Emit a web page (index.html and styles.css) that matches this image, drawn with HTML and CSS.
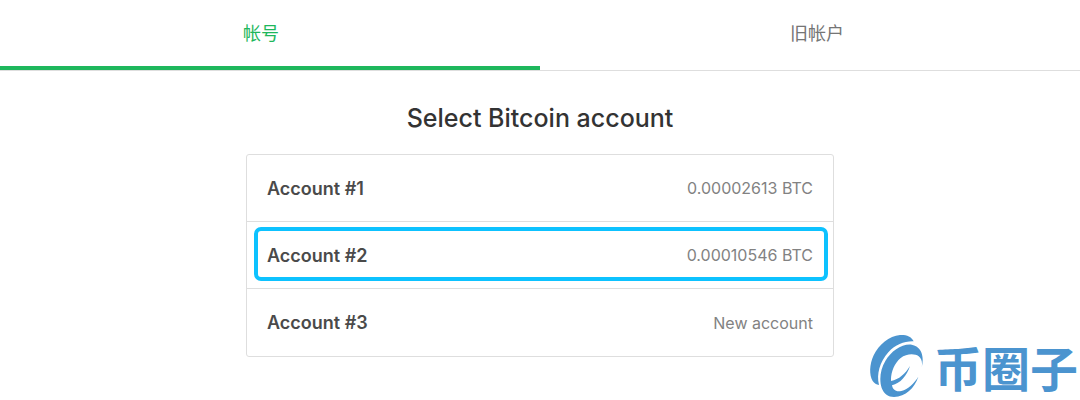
FILE: index.html
```
<!DOCTYPE html>
<html lang="zh-CN">
<head>
    <meta charset="UTF-8">
    <meta name="viewport" content="width=device-width, initial-scale=1.0">
    <title>Select Bitcoin account</title>
    <link rel="stylesheet" href="styles.css">
</head>
<body>
    <nav class="tabs">
        <a class="tab active" href="#accounts">帐号</a>
        <a class="tab" href="#legacy">旧帐户</a>
    </nav>

    <main class="content" id="accounts">
        <h1 class="title">Select Bitcoin account</h1>
        <div class="account-list">
            <button class="account" type="button">
                <span class="name">Account #1</span>
                <span class="balance">0.00002613 BTC</span>
            </button>
            <button class="account selected" type="button">
                <span class="name">Account #2</span>
                <span class="balance">0.00010546 BTC</span>
            </button>
            <button class="account" type="button">
                <span class="name">Account #3</span>
                <span class="balance">New account</span>
            </button>
        </div>
    </main>

    <div class="watermark">
        <svg class="watermark-logo" viewBox="27 27 165 192" aria-hidden="true">
            <path d="M161 49C154 34 139 29 120 30C88 33 56 59 41 91C28 119 27 150 38 168C43 175 49 179 57 180C49 147 59 112 85 82C107 58 133 48 161 49Z"/>
            <path d="M185 128C194 91 183 64 155 59C125 56 94 78 76 108C61 132 57 165 65 189C72 207 85 216 102 216C137 214 163 190 175 155C162 175 145 192 124 198C108 202 98 194 96 181C121 175 141 152 150 123C136 147 117 163 93 168C92 143 103 115 122 99C139 86 164 85 176 94C185 102 188 112 185 128Z"/>
        </svg>
        <span class="watermark-text">币圈子</span>
    </div>
</body>
</html>
```

FILE: styles.css
```
* {
    box-sizing: border-box;
}
body {
    margin: 0;
    background-color: #fff;
    font-family: Inter, "Noto Sans CJK SC", sans-serif;
}
.tabs {
    display: flex;
    border-bottom: 1px solid #dedede;
}
.tab {
    flex: 0 0 50%;
    height: 70px;
    padding-left: 14px;
    border-bottom: 4px solid transparent;
    color: #757575;
    font-size: 18px;
    line-height: 68px;
    text-align: center;
    text-decoration: none;
}
.tab.active {
    padding: 0 18px 0 0;
    border-bottom-color: #1eb75c;
    color: #1eb75c;
}
.content {
    max-width: 588px;
    margin: 0 auto;
    padding-top: 31px;
}
.title {
    margin: 0 0 20px;
    color: #333;
    font-size: 25px;
    font-weight: 500;
    line-height: 32px;
    text-align: center;
}
.account-list {
    border: 1px solid #dedede;
    border-radius: 3px;
}
.account {
    position: relative;
    display: flex;
    justify-content: space-between;
    align-items: center;
    width: 100%;
    height: 67px;
    padding: 0 20px;
    border: 0;
    border-bottom: 1px solid #dedede;
    background: none;
    font-family: inherit;
    cursor: pointer;
}
.account:last-child {
    border-bottom: 0;
}
.account.selected::after {
    content: "";
    position: absolute;
    inset: 5px 5px 7px 7px;
    border: 4px solid #0dc2ff;
    border-radius: 7px;
}
.name {
    color: #4a4a4a;
    font-size: 18px;
    font-weight: 600;
}
.balance {
    color: #828282;
    font-size: 16px;
}
.watermark {
    position: absolute;
    right: 2px;
    bottom: 1px;
    display: flex;
    align-items: center;
    gap: 10px;
    height: 66px;
    color: #4b94cf;
}
.watermark-logo {
    width: 55px;
    height: 64px;
    fill: currentColor;
}
.watermark-text {
    font-family: "Noto Sans CJK SC", sans-serif;
    font-size: 48px;
    font-weight: 700;
    line-height: 64px;
}
```
